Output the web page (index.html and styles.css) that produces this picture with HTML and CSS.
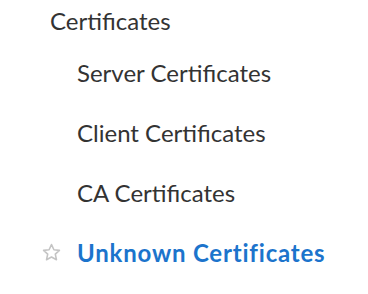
FILE: index.html
```html
<!DOCTYPE html>
<html lang="en">
<head>
  <meta charset="UTF-8">
  <title>Certificates</title>
  <link rel="stylesheet" href="styles.css">
</head>
<body>
  <div class="nav-group">
    <div class="nav-title">Certificates</div>
    <ul class="nav-list">
      <li class="nav-item">Server Certificates</li>
      <li class="nav-item">Client Certificates</li>
      <li class="nav-item">CA Certificates</li>
      <li class="nav-item active">
        <svg class="star" width="19" height="19" viewBox="0 0 18 18">
          <path d="M9 1.5 L11.3 6.4 L16.5 7 L12.6 10.6 L13.7 15.9 L9 13.3 L4.3 15.9 L5.4 10.6 L1.5 7 L6.7 6.4 Z" fill="none" stroke="#c4c4c4" stroke-width="1.5" stroke-linejoin="round"/>
        </svg>
        <a href="#">Unknown Certificates</a>
      </li>
    </ul>
  </div>
</body>
</html>
```
FILE: styles.css
```css
body {
  margin: 0;
  background-color: #fff;
  color: #333;
  font-family: Lato, "Open Sans", sans-serif;
  font-size: 24px;
}
.nav-group {
  padding: 5px 0 0 50px;
}
.nav-title {
  line-height: 32px;
}
.nav-list {
  list-style: none;
  margin: 0;
  padding: 6px 0 0 27px;
}
.nav-item {
  position: relative;
  line-height: 60px;
}
.nav-item a {
  color: #1c74cc;
  font-weight: bold;
  letter-spacing: 0.8px;
  text-decoration: none;
}
.star {
  position: absolute;
  left: -35px;
  top: 20px;
}
```
